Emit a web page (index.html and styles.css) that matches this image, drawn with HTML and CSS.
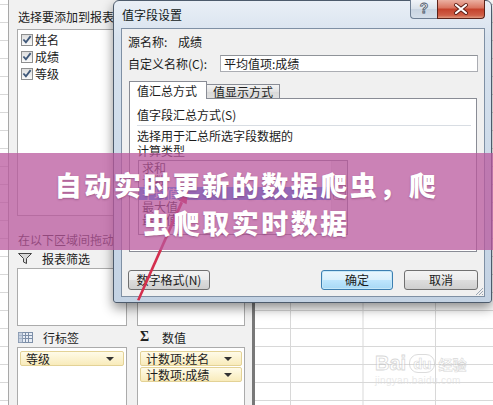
FILE: index.html
```html
<!DOCTYPE html>
<html lang="zh-CN">
  <head>
    <meta charset="UTF-8" />
    <title>值字段设置</title>
    <link rel="stylesheet" href="styles.css">
  </head>
  <body>
    <div class="screen">
      <div class="sheet sheet-left"></div>

      <div class="pane">
        <div class="pane-title">选择要添加到报表的字段:</div>
        <div class="field-list">
          <div class="field"><span class="check"><svg width="11" height="11" viewBox="0 0 11 11"><path d="M1.5 5.5 L4.3 8.5 L9.5 1.8" fill="none" stroke="#40597a" stroke-width="2"/></svg></span>姓名</div>
          <div class="field"><span class="check"><svg width="11" height="11" viewBox="0 0 11 11"><path d="M1.5 5.5 L4.3 8.5 L9.5 1.8" fill="none" stroke="#40597a" stroke-width="2"/></svg></span>成绩</div>
          <div class="field"><span class="check"><svg width="11" height="11" viewBox="0 0 11 11"><path d="M1.5 5.5 L4.3 8.5 L9.5 1.8" fill="none" stroke="#40597a" stroke-width="2"/></svg></span>等级</div>
        </div>
        <div class="pane-hint">在以下区域间拖动字段:</div>
        <div class="areas">
          <div class="area">
            <div class="area-head">
              <svg width="14" height="11" viewBox="0 0 14 11"><path d="M0.5 0.5 H13.5 L8.5 5.5 V10.5 L5.5 9 V5.5 Z" fill="#d8d8d8" stroke="#444" stroke-width="1"/></svg>
              报表筛选
            </div>
            <div class="area-box"></div>
          </div>
          <div class="area">
            <div class="area-head">
              <svg width="14" height="11" viewBox="0 0 14 11"><rect x="0.5" y="0.5" width="13" height="10" fill="#fff" stroke="#7a8ba3"/><path d="M5 0.5 V10.5 M9.5 0.5 V10.5" stroke="#7a8ba3"/></svg>
              列标签
            </div>
            <div class="area-box"></div>
          </div>
          <div class="area">
            <div class="area-head">
              <svg width="15" height="11" viewBox="0 0 15 11"><rect x="0.5" y="0.5" width="14" height="10" fill="#e9eef6" stroke="#7d8fa8"/><path d="M0.5 3.5 H14.5 M0.5 6.5 H14.5 M4.5 0.5 V10.5 M7.5 0.5 V10.5 M10.5 0.5 V10.5" stroke="#7d8fa8"/><rect x="0.5" y="0.5" width="4" height="10" fill="#b9c6d8" opacity="0.7"/></svg>
              行标签
            </div>
            <div class="area-box tall">
              <div class="chip">等级<span class="drop"></span></div>
            </div>
          </div>
          <div class="area">
            <div class="area-head"><span class="sigma">Σ</span>数值</div>
            <div class="area-box tall">
              <div class="chip">计数项:姓名<span class="drop"></span></div>
              <div class="chip">计数项:成绩<span class="drop"></span></div>
            </div>
          </div>
        </div>
      </div>

      <div class="sheet sheet-main">
        <div class="watermark">
          <div class="wm-top"><span class="wm-bai">Bai</span><span class="wm-du">du</span><span class="wm-cn">经验</span></div>
          <div class="wm-url">jingyan.baidu.com</div>
        </div>
      </div>

      <div class="dialog">
        <div class="titlebar">
          <div class="title">值字段设置</div>
          <div class="caption">
            <div class="btn-help">?</div>
            <div class="btn-close">
              <svg width="46" height="17" viewBox="0 0 46 17"><path d="M18 4 L28 12 M28 4 L18 12" stroke="#5b1d14" stroke-width="4" stroke-linecap="round"/><path d="M18 4 L28 12 M28 4 L18 12" stroke="#fff" stroke-width="2.2" stroke-linecap="round"/></svg>
            </div>
          </div>
        </div>
        <div class="client">
          <div class="row src"><span class="lbl">源名称:</span>成绩</div>
          <div class="row custom"><span class="lbl">自定义名称(C):</span><div class="input">平均值项:成绩</div></div>
          <div class="tabs">
            <div class="tab active">值汇总方式</div>
            <div class="tab">值显示方式</div>
          </div>
          <div class="panel">
            <div class="sum-label">值字段汇总方式(S)</div>
            <div class="sep"></div>
            <div class="desc">选择用于汇总所选字段数据的<br>计算类型</div>
            <div class="list">
              <div class="items">
                <div class="item">求和</div>
                <div class="item">计数</div>
                <div class="item selected">平均值</div>
                <div class="item">最大值</div>
                <div class="item">最小值</div>
              </div>
              <div class="scroll"><span class="thumb"></span></div>
            </div>
          </div>
          <div class="actions">
            <div class="btn btn-num">数字格式(N)</div>
            <div class="btn btn-ok">确定</div>
            <div class="btn btn-cancel">取消</div>
          </div>
          <svg class="grip" width="10" height="10" viewBox="0 0 10 10"><path d="M9 2 L2 9 M9 5 L5 9 M9 8 L8 9" stroke="#9aa6b4" stroke-width="1"/></svg>
        </div>
      </div>

      <svg class="arrow" width="493" height="405" viewBox="0 0 493 405">
        <path d="M137 300 L139.5 300.5 L183 203 L180.5 201.5 Z" fill="#d42f4e"/>
        <path d="M188 192 L186.6 204.2 L178.6 200.6 Z" fill="#d42f4e"/>
      </svg>

      <div class="banner">自动实时更新的数据爬虫，爬<br>虫爬取实时数据</div>
    </div>
  </body>
</html>
```

FILE: styles.css
```css
* {
  box-sizing: border-box;
}
body {
  margin: 0;
  width: 493px;
  height: 405px;
  overflow: hidden;
  font-family: "Noto Sans CJK SC", "Liberation Sans", sans-serif;
  font-size: 12px;
  color: #1c1c1c;
}
.screen {
  position: relative;
  width: 493px;
  height: 405px;
  display: flex;
  overflow: hidden;
  background: #fff;
}

/* excel sheet behind */
.sheet {
  background-color: #fff;
  background-image: linear-gradient(to bottom, #d8d8d8 1px, transparent 1px);
  background-size: 100% 18px;
  background-position: 0 4px;
}
.sheet-left {
  width: 8px;
}
.sheet-main {
  flex: 1;
  position: relative;
  background-image: linear-gradient(to bottom, #d8d8d8 1px, transparent 1px),
    linear-gradient(to right, #d8d8d8 1px, transparent 1px);
  background-size: 100% 18px, 72.5px 100%;
  background-position: 0 4px, 35px 0;
}

/* pivot field list */
.pane {
  width: 247px;
  background: #f1f1f1;
  border-left: 1px solid #a8a8a8;
  border-right: 3px solid #787878;
  padding: 0 7px 0 8px;
}
.pane-title {
  margin-top: 9px;
  line-height: 16px;
  padding-left: 1px;
  white-space: nowrap;
}
.field-list {
  margin-top: 4px;
  height: 187px;
  background: #fff;
  border: 1px solid #ababab;
  padding-top: 1px;
}
.field {
  display: flex;
  align-items: center;
  height: 17px;
  padding-left: 3px;
  gap: 2px;
}
.check {
  width: 12px;
  height: 12px;
  border: 1px solid #8e8f8f;
  background: linear-gradient(#dedede, #fafafa);
  display: flex;
  align-items: center;
  justify-content: center;
}
.pane-hint {
  margin-top: 16px;
  line-height: 16px;
  padding-left: 1px;
  white-space: nowrap;
}
.areas {
  display: grid;
  grid-template-columns: 110px 108px;
  column-gap: 10px;
  row-gap: 1px;
}
.area-head {
  height: 20px;
  display: flex;
  align-items: center;
  gap: 10px;
  padding-left: 1px;
  white-space: nowrap;
}
.sigma {
  font-family: "Liberation Serif", serif;
  font-weight: bold;
  font-size: 14px;
  width: 14px;
  padding-left: 2px;
  color: #222;
}
.area-box {
  height: 58px;
  background: #fff;
  border: 1px solid #ababab;
  padding: 2px 2px 0;
}
.area-box.tall {
  height: 70px;
  padding-top: 3px;
}
.chip {
  height: 15px;
  margin-bottom: 1px;
  border: 1px solid #e3d296;
  border-radius: 2px;
  background: linear-gradient(#fffbe8, #f8ebbb);
  display: flex;
  align-items: center;
  justify-content: space-between;
  padding: 0 9px 0 5px;
  line-height: 13px;
  white-space: nowrap;
}
.drop {
  width: 0;
  height: 0;
  border-left: 4px solid transparent;
  border-right: 4px solid transparent;
  border-top: 4px solid #333;
}

/* watermark */
.watermark {
  position: absolute;
  left: 120px;
  top: 352px;
  opacity: 0.55;
  color: #fff;
}
.wm-top {
  display: flex;
  align-items: center;
  gap: 3px;
  font-family: "Liberation Sans", sans-serif;
  font-weight: bold;
}
.wm-bai {
  font-size: 20px;
  -webkit-text-stroke: 0.8px #b8b8b8;
}
.wm-du {
  font-size: 15px;
  border: 1px solid #c0c0c0;
  border-radius: 9px;
  padding: 0 3px;
  -webkit-text-stroke: 0.6px #b8b8b8;
}
.wm-cn {
  font-family: "Noto Sans CJK SC", sans-serif;
  font-size: 14px;
  -webkit-text-stroke: 0.6px #b8b8b8;
}
.wm-url {
  font-family: "Liberation Sans", sans-serif;
  font-size: 10px;
  color: #d8d8d8;
  letter-spacing: 0.3px;
}

/* dialog */
.dialog {
  position: absolute;
  left: 113px;
  top: 0;
  width: 379px;
  height: 303px;
  border: 1px solid #4d5b6c;
  border-radius: 6px 6px 3px 3px;
  background: linear-gradient(#e9eff6, #d7e2ee 12%, #cbd9e8 60%, #c3d2e3);
  padding: 0 6px 5px 7px;
  display: flex;
  flex-direction: column;
  box-shadow: 0 5px 12px rgba(0, 0, 0, 0.45);
}
.titlebar {
  height: 27px;
  display: flex;
  align-items: flex-start;
}
.title {
  flex: 1;
  line-height: 27px;
  padding-left: 1px;
  color: #101820;
}
.caption {
  display: flex;
  margin-top: -1px;
}
.btn-help {
  width: 27px;
  height: 19px;
  border: 1px solid #6f7f94;
  border-right: none;
  border-top: none;
  border-radius: 0 0 0 4px;
  background: linear-gradient(#f1f4f8, #d9e1ea 50%, #c9d4e1 51%, #d5dfea);
  text-align: center;
  font-family: "Liberation Sans", sans-serif;
  font-size: 14px;
  font-weight: bold;
  line-height: 17px;
  color: #eef2f6;
  -webkit-text-stroke: 0.8px #4d5868;
}
.btn-close {
  width: 48px;
  height: 19px;
  border: 1px solid #5c2319;
  border-top: none;
  border-radius: 0 0 4px 0;
  background: linear-gradient(#ebb0a2, #d9735e 45%, #c4412b 50%, #cf5f47 85%, #e09a80);
  display: flex;
  align-items: center;
  justify-content: center;
}
.client {
  flex: 1;
  position: relative;
  background: #f0f0f0;
  border: 1px solid #7f90a4;
  padding: 0 6px 0 6px;
  display: flex;
  flex-direction: column;
}
.row {
  display: flex;
  align-items: center;
  white-space: nowrap;
}
.src {
  margin-top: 5px;
  line-height: 16px;
}
.src .lbl {
  width: 50px;
}
.custom {
  margin-top: 5px;
  height: 17px;
}
.custom .lbl {
  width: 92px;
}
.input {
  flex: 1;
  height: 17px;
  border: 1px solid #abadb3;
  border-top-color: #8f9399;
  background: #fff;
  padding-left: 3px;
  line-height: 15px;
}
.tabs {
  display: flex;
  align-items: flex-end;
  margin-top: 9px;
  margin-left: 1px;
  height: 18px;
  position: relative;
  z-index: 1;
}
.tab {
  width: 73px;
  height: 14px;
  margin-bottom: 1px;
  border: 1px solid #898c95;
  border-left: none;
  border-bottom: none;
  background: linear-gradient(#f4f4f4, #e3e3e3 50%, #d9d9d9 51%, #e0e0e0);
  padding-left: 6px;
  line-height: 13px;
  white-space: nowrap;
}
.tab.active {
  width: 78px;
  height: 18px;
  margin-bottom: 0;
  border-left: 1px solid #898c95;
  background: #fff;
  padding-left: 7px;
  line-height: 17px;
}
.panel {
  margin-top: -1px;
  margin-left: 1px;
  width: 348px;
  height: 154px;
  border: 1px solid #898c95;
  background: #fff;
  padding: 0 5px 0 7px;
}
.sum-label {
  margin-top: 8px;
  line-height: 16px;
}
.sep {
  margin-top: 2px;
  height: 1px;
  background: #d8dde3;
}
.desc {
  margin-top: 2px;
  line-height: 15px;
}
.list {
  margin-top: 2px;
  margin-left: 1px;
  width: 210px;
  height: 75px;
  border: 1px solid #828790;
  display: flex;
  overflow: hidden;
}
.items {
  flex: 1;
}
.item {
  line-height: 13px;
  height: 13px;
  padding-left: 3px;
}
.item.selected {
  background: #3399ff;
  color: #fff;
}
.scroll {
  width: 16px;
  background: #ececec;
  border-left: 1px solid #e2e2e2;
  padding: 17px 1px 0;
}
.thumb {
  display: block;
  height: 22px;
  border: 1px solid #979797;
  border-radius: 2px;
  background: linear-gradient(to right, #f1f1f1, #dcdcdc);
}
.actions {
  display: flex;
  margin-top: 18px;
}
.btn {
  height: 20px;
  border: 1px solid #707070;
  border-radius: 3px;
  background: linear-gradient(#f3f3f3, #ebebeb 50%, #dddddd 51%, #cfcfcf);
  text-align: center;
  line-height: 18px;
  white-space: nowrap;
}
.btn-num {
  width: 82px;
}
.btn-ok {
  width: 72px;
  margin-left: auto;
  border-color: #3c7fb1;
  background: linear-gradient(#eaf6fd, #d9f0fc 50%, #bee6fd 51%, #a7d9f5);
  box-shadow: inset 0 0 0 1px #c6e8f8;
}
.btn-cancel {
  width: 74px;
  margin-left: 11px;
}
.grip {
  position: absolute;
  right: 0;
  bottom: 0;
}

/* annotation drawn over the screenshot */
.arrow {
  position: absolute;
  left: 0;
  top: 0;
}
.banner {
  position: absolute;
  left: 0;
  top: 153px;
  width: 493px;
  height: 97px;
  background: rgba(185, 88, 158, 0.75);
  color: #fff;
  text-align: center;
  font-size: 27px;
  font-weight: 900;
  letter-spacing: 2.5px;
  line-height: 38px;
  padding-top: 13px;
  white-space: nowrap;
  text-shadow: 0 1px 2px rgba(80, 20, 60, 0.35);
}
```
